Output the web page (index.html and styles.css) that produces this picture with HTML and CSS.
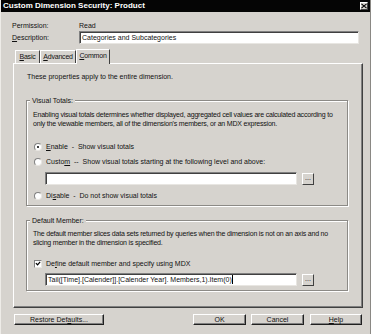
FILE: index.html
```html
<!DOCTYPE html>
<html>
<head>
<meta charset="utf-8">
<link rel="stylesheet" href="styles.css">
</head>
<body>
<div class="window">
  <div class="titlebar">
    <span class="title">Custom Dimension Security: Product</span>
    <span class="close"><svg width="7" height="6" viewBox="0 0 7 6"><path d="M0.5 0.5 L6.5 5.5 M6.5 0.5 L0.5 5.5" stroke="#000" stroke-width="1.3"/></svg></span>
  </div>
  <div class="content">
    <div class="row perm"><span class="lbl">Permission:</span><span>Read</span></div>
    <div class="row desc"><span class="lbl"><u>D</u>escription:</span><div class="textbox wide">Categories and Subcategories</div></div>
    <div class="tabs">
      <div class="tab t-basic"><u>B</u>asic</div>
      <div class="tab t-adv"><u>A</u>dvanced</div>
      <div class="tab t-common active"><u>C</u>ommon</div>
    </div>
    <div class="panel">
      <div class="intro">These properties apply to the entire dimension.</div>
      <div class="group vt">
        <div class="legend">Visual Totals:</div>
        <p class="gtext">Enabling visual totals determines whether displayed, aggregated cell values are calculated according to only the viewable members, all of the dimension's members, or an MDX expression.</p>
        <div class="opt o-enable"><span class="radio on"></span><span><u>E</u>nable&nbsp; - &nbsp;Show visual totals</span></div>
        <div class="opt o-custom"><span class="radio"></span><span>Custo<u>m</u>&nbsp; -- &nbsp;Show visual totals starting at the following level and above:</span></div>
        <div class="field"><div class="textbox med"></div><div class="ellip">...</div></div>
        <div class="opt o-disable"><span class="radio"></span><span>Di<u>s</u>able&nbsp; - &nbsp;Do not show visual totals</span></div>
      </div>
      <div class="group dm">
        <div class="legend">Default Member:</div>
        <p class="gtext">The default member slices data sets returned by queries when the dimension is not on an axis and no slicing member in the dimension is specified.</p>
        <div class="opt o-check"><span class="check"><svg width="7" height="7" viewBox="0 0 7 7"><path d="M1 3 L3 5 L6 1.5" fill="none" stroke="#000" stroke-width="1.4"/></svg></span><span>De<u>f</u>ine default member and specify using MDX</span></div>
        <div class="field"><div class="textbox med">Tail([Time].[Calender]].[Calender Year]. Members,1).Item(0)<span class="caret"></span></div><div class="ellip">...</div></div>
      </div>
    </div>
    <div class="buttons">
      <div class="btn restore">Restore Def<u>a</u>ults...</div>
      <div class="spacer"></div>
      <div class="btn ok">OK</div>
      <div class="btn cancel">Cancel</div>
      <div class="btn help"><u>H</u>elp</div>
    </div>
  </div>
</div>
</body>
</html>
```

FILE: styles.css
```css
html, body {
  margin: 0;
  padding: 0;
  background: #d6d3ce;
}
.window {
  width: 371px;
  height: 334px;
  box-sizing: border-box;
  background: #d6d3ce;
  border-left: 1px solid #eeece8;
  border-right: 1px solid #8a8884;
  font-family: "Liberation Sans", Arial, sans-serif;
  font-size: 7px;
  color: #111;
  overflow: hidden;
}
.titlebar {
  height: 12px;
  background: #050505;
  color: #fff;
  display: flex;
  align-items: center;
  justify-content: space-between;
  padding: 0 2px 0 2px;
}
.title {
  font-weight: bold;
  font-size: 8px;
  line-height: 12px;
}
.close {
  width: 8px;
  height: 8px;
  background: #d6d3ce;
  border: 1px solid;
  border-color: #fff #404040 #404040 #fff;
  box-sizing: border-box;
  display: flex;
  align-items: center;
  justify-content: center;
}
.content {
  padding: 0 8px 0 11px;
}
.row {
  display: flex;
  align-items: center;
}
.lbl {
  width: 67px;
}
.perm {
  height: 10px;
  margin-top: 8px;
}
.desc {
  margin-top: 1px;
  height: 13px;
}
.textbox {
  background: #fff;
  box-sizing: border-box;
  border: 1px solid;
  border-color: #808080 #e8e6e2 #e8e6e2 #808080;
  box-shadow: inset 1px 1px 0 #404040;
  height: 13px;
  line-height: 11px;
  padding-left: 2px;
  white-space: nowrap;
  overflow: hidden;
}
.wide {
  width: 280px;
}
.tabs {
  display: flex;
  margin-top: 4px;
  margin-left: 1px;
  height: 15px;
  align-items: flex-end;
  position: relative;
  z-index: 1;
}
.tab {
  height: 13px;
  box-sizing: border-box;
  border: 1px solid;
  border-bottom: none;
  border-color: #fff #404040 transparent #fff;
  line-height: 11px;
  text-align: center;
  letter-spacing: -0.2px;
}
.t-basic { width: 25px; margin-left: 2px; }
.t-adv { width: 36px; }
.t-common { width: 34px; }
.tab.active {
  height: 15px;
  margin-bottom: -1px;
  background: #d6d3ce;
  line-height: 12px;
}
.panel {
  width: 350px;
  height: 245px;
  box-sizing: border-box;
  border: 1px solid;
  border-color: #fff #404040 #404040 #fff;
  box-shadow: inset -1px -1px 0 #808080;
  margin-left: 1px;
  padding: 8px 0 0 12px;
}
.intro {
  line-height: 9px;
  margin-left: 1px;
}
.group {
  position: relative;
  width: 322px;
  box-sizing: border-box;
  border: 1px solid #8c8a86;
  box-shadow: 1px 1px 0 #fff, inset 1px 1px 0 #fff;
  padding: 9px 0 0 6px;
}
.vt {
  margin-top: 19px;
  height: 106px;
}
.dm {
  margin-top: 14px;
  height: 71px;
  padding-top: 8px;
}
.legend {
  position: absolute;
  top: -5px;
  left: 3px;
  background: #d6d3ce;
  padding: 0 2px;
  line-height: 9px;
}
.gtext {
  margin: 0;
  line-height: 9px;
  width: 306px;
  letter-spacing: -0.2px;
}
.opt {
  display: flex;
  align-items: center;
  height: 9px;
}
.o-enable { margin-top: 14px; margin-left: 1px; }
.o-custom { margin-top: 6px; margin-left: 1px; }
.o-disable { margin-top: 6px; margin-left: 1px; }
.o-check { margin-top: 12px; margin-left: 1px; }
.radio {
  width: 8px;
  height: 8px;
  box-sizing: border-box;
  border-radius: 50%;
  background: #fff;
  border: 1px solid;
  border-color: #808080 #e8e6e2 #e8e6e2 #808080;
  margin-right: 4px;
  position: relative;
}
.radio.on::after {
  content: "";
  position: absolute;
  left: 2px;
  top: 2px;
  width: 2px;
  height: 2px;
  border-radius: 50%;
  background: #000;
}
.check {
  width: 8px;
  height: 8px;
  box-sizing: border-box;
  background: #fff;
  border: 1px solid;
  border-color: #808080 #e8e6e2 #e8e6e2 #808080;
  margin-right: 4px;
  display: flex;
  align-items: center;
  justify-content: center;
}
.field {
  display: flex;
  margin-top: 6px;
  margin-left: 12px;
  align-items: center;
}
.dm .field { margin-top: 5px; }
.med {
  width: 252px;
}
.ellip {
  width: 12px;
  height: 12px;
  box-sizing: border-box;
  margin-left: 5px;
  border: 1px solid;
  border-color: #fff #404040 #404040 #fff;
  text-align: center;
  line-height: 7px;
  font-size: 7px;
}
.vt .field { margin-top: 6px; }
.caret {
  display: inline-block;
  width: 1px;
  height: 9px;
  background: #000;
  vertical-align: -2px;
}
.buttons {
  display: flex;
  margin-top: 6px;
  margin-left: 2px;
}
.btn {
  height: 11px;
  box-sizing: border-box;
  border: 1px solid;
  border-color: #fff #202020 #202020 #fff;
  box-shadow: inset -1px -1px 0 #808080;
  text-align: center;
  line-height: 9px;
}
.restore { width: 90px; }
.spacer { flex: 1; }
.ok { width: 53px; }
.cancel { width: 53px; margin-left: 5px; }
.help { width: 52px; margin-left: 6px; }
```
